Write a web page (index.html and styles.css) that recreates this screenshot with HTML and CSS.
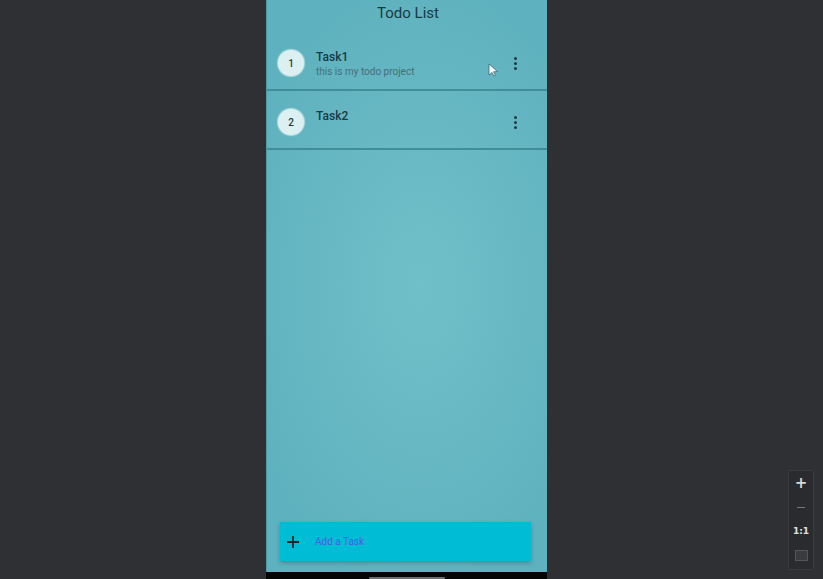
FILE: index.html
```html
<!DOCTYPE html>
<html>
<head>
<meta charset="utf-8">
<link rel="stylesheet" href="styles.css">
</head>
<body>
<div class="stage">
  <div class="phone">
    <div class="screen">
      <div class="appbar">Todo List</div>
      <div class="list">
        <div class="item">
          <div class="avatar">1</div>
          <div class="texts">
            <div class="title">Task1</div>
            <div class="sub">this is my todo project</div>
          </div>
          <div class="more"><span></span><span></span><span></span></div>
        </div>
        <div class="item">
          <div class="avatar">2</div>
          <div class="texts">
            <div class="title">Task2</div>
          </div>
          <div class="more"><span></span><span></span><span></span></div>
        </div>
      </div>
      <div class="spacer"></div>
      <div class="addbtn">
        <svg class="plus" width="14" height="14" viewBox="0 0 14 14"><path d="M7 1v12M1 7h12" stroke="#15262b" stroke-width="1.8"/></svg>
        <span class="addtext">Add a Task</span>
      </div>
    </div>
    <div class="navbar"><div class="home"></div></div>
  </div>
</div>
<svg class="cursor" width="12" height="14" viewBox="0 0 12 14"><path d="M1 1 L1 12 L4 9.5 L6 13 L7.5 12.3 L5.6 8.8 L9.5 8.5 Z" fill="#f4f7f8" stroke="#3a5a66" stroke-width="0.7"/></svg>
<div class="zoomctl">
  <div class="zc plusz">+</div>
  <div class="zc minus"></div>
  <div class="zc one">1:1</div>
  <div class="zc fit"><div class="fitbox"></div></div>
</div>
</body>
</html>
```
FILE: styles.css
```css
html, body {
  margin: 0;
  padding: 0;
}
body {
  background: #2f3033;
  width: 823px;
  height: 579px;
  overflow: hidden;
  font-family: Roboto, "Noto Sans", sans-serif;
  position: relative;
}
.stage {
  display: flex;
  padding-left: 266px;
  height: 579px;
}
.phone {
  width: 281px;
  height: 579px;
  display: flex;
  flex-direction: column;
}
.screen {
  flex: 1;
  display: flex;
  flex-direction: column;
  background: radial-gradient(ellipse 70% 55% at 55% 50%, #70c0c9 0%, #68b9c4 45%, #5eb1be 100%);
  border-left: 1px solid #4e9aa4;
  box-sizing: border-box;
}
.appbar {
  height: 32px;
  line-height: 27px;
  text-align: center;
  font-size: 15px;
  color: #173b44;
  padding-left: 2px;
}
.list {
  display: flex;
  flex-direction: column;
}
.item {
  border-bottom: 2px solid #3f8e99;
  display: flex;
  align-items: flex-start;
  padding: 18px 0 0 11px;
  height: 39px;
}
.avatar {
  width: 26px;
  height: 26px;
  border-radius: 50%;
  background: #dcf0f2;
  box-shadow: 0 0 1px 1px rgba(230, 248, 250, 0.6);
  color: #1f3a40;
  font-size: 10px;
  font-weight: 500;
  display: flex;
  align-items: center;
  justify-content: center;
}
.texts {
  margin-left: 12px;
  flex: 1;
}
.title {
  font-size: 12px;
  line-height: 14px;
  color: #183a44;
  font-weight: 500;
}
.sub {
  font-size: 10px;
  line-height: 14px;
  margin-top: 1px;
  color: #456f79;
}
.more {
  width: 4px;
  margin-right: 30px;
  margin-top: 7px;
  display: flex;
  flex-direction: column;
  gap: 2px;
  align-items: center;
}
.more span {
  width: 3px;
  height: 3px;
  border-radius: 50%;
  background: #1e3a42;
}
.spacer {
  flex: 1;
}
.addbtn {
  margin: 0 16px 11px 13px;
  height: 39px;
  background: #00bdd6;
  box-shadow: 0 2px 4px rgba(20, 70, 90, 0.35);
  display: flex;
  align-items: center;
  padding-left: 6px;
}
.plus {
  display: block;
}
.addtext {
  margin-left: 15px;
  font-size: 10px;
  color: #4b5ce6;
}
.navbar {
  height: 7px;
  background: #050506;
  display: flex;
  justify-content: center;
  align-items: flex-end;
}
.home {
  width: 76px;
  height: 2px;
  background: #6d6e70;
  border-radius: 1px;
}
.cursor {
  position: absolute;
  left: 488px;
  top: 63px;
}
.zoomctl {
  position: absolute;
  left: 788px;
  top: 470px;
  width: 24px;
  height: 98px;
  background: #2a2b2e;
  border: 1px solid #3a3b3e;
  border-radius: 2px;
  display: flex;
  flex-direction: column;
  align-items: center;
}
.zc {
  height: 24px;
  width: 24px;
  display: flex;
  align-items: center;
  justify-content: center;
  color: #d8d8d8;
  font-family: "DejaVu Sans", sans-serif;
}
.plusz {
  font-size: 15px;
  font-weight: bold;
}
.minus::before {
  content: "";
  width: 8px;
  height: 1px;
  background: #777;
  display: block;
}
.one {
  font-size: 9px;
  font-weight: bold;
  color: #e0e0e0;
}
.fitbox {
  width: 11px;
  height: 9px;
  border: 1px solid #555;
  background: #3a3b3e;
}
```
